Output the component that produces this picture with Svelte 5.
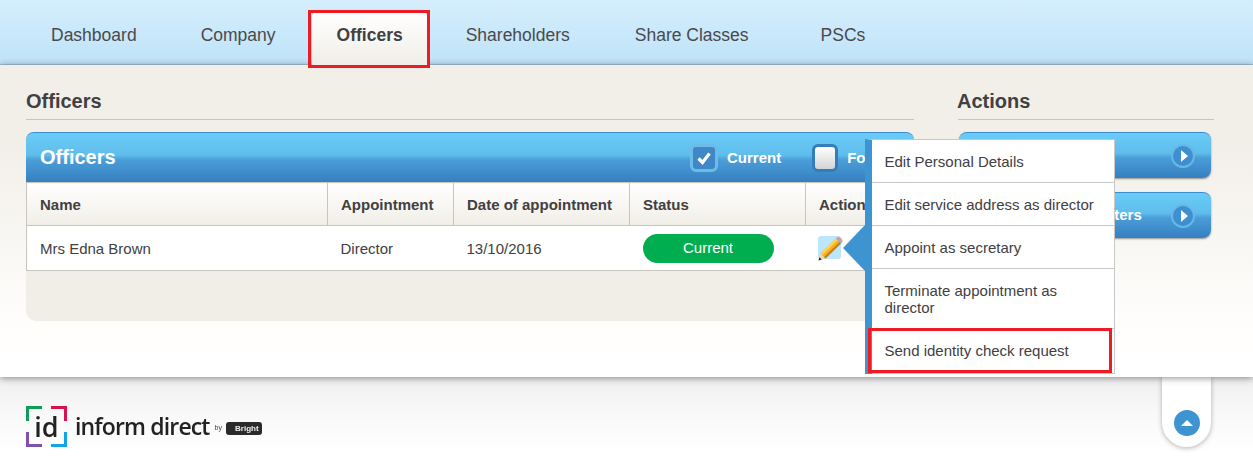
<script>
  const tabs = ['Dashboard', 'Company', 'Officers', 'Shareholders', 'Share Classes', 'PSCs'];
  const menuItems = [
    'Edit Personal Details',
    'Edit service address as director',
    'Appoint as secretary',
    'Terminate appointment as director',
    'Send identity check request'
  ];
</script>

<header class="top">
  <nav class="tabs">
    {#each tabs as tab}
      <a class="tab" class:active={tab === 'Officers'} href="#top">{tab}</a>
    {/each}
  </nav>
</header>

<main class="content">
  <section class="left">
    <h2>Officers</h2>
    <div class="panel">
      <div class="panel-head">
        <span class="panel-title">Officers</span>
        <div class="filters">
          <span class="check on">
            <svg viewBox="0 0 20 20" width="20" height="20"><path d="M4.500 10.500 8.500 14.500 15.500 5.500" fill="none" stroke="#fff" stroke-width="3.200"/></svg>
          </span>
          <span class="check-label current">Current</span>
          <span class="check off"></span>
          <span class="check-label">Former</span>
        </div>
      </div>
      <table>
        <thead>
          <tr>
            <th class="c1">Name</th>
            <th class="c2">Appointment</th>
            <th class="c3">Date of appointment</th>
            <th class="c4">Status</th>
            <th class="c5">Actions</th>
          </tr>
        </thead>
        <tbody>
          <tr>
            <td>Mrs Edna Brown</td>
            <td>Director</td>
            <td>13/10/2016</td>
            <td><span class="status">Current</span></td>
            <td class="action-cell">
              <span class="pencil">
                <svg viewBox="0 0 25 25" width="25" height="25">
                  <path d="M0.500 24.500 2.500 17.500 7.500 22.500Z" fill="#ecd9b4"/>
                  <path d="M0.500 24.500 1.400 21.300 3.700 23.500Z" fill="#1d1d1d"/>
                  <path d="M2.500 17.500 18 2.500 23 7.500 7.500 22.500Z" fill="#f7b21f"/>
                  <path d="M2.500 17.500 18 2.500 19.700 4.200 4.200 19.200Z" fill="#fbd354"/>
                  <path d="M6 21 21.400 6 23 7.500 7.500 22.500Z" fill="#c97f14"/>
                  <path d="M18 2.500 19.500 1 24.300 6 23 7.500Z" fill="#a9a9a9"/>
                  <path d="M19.500 1C21 -0.500 25.800 4.300 24.300 6Z" fill="#ea8fa0"/>
                </svg>
              </span>
              <div class="menu">
                <span class="arrow"></span>
                {#each menuItems as item, i}
                  <a class="menu-item" class:flagged={i === 4} href="#top">{item}</a>
                {/each}
              </div>
            </td>
          </tr>
        </tbody>
      </table>
      <div class="panel-foot"></div>
    </div>
  </section>

  <aside class="right">
    <h2>Actions</h2>
    <a class="action-btn" href="#top">
      <span>Edit company</span>
      <span class="go"><span class="go-arrow"></span></span>
    </a>
    <a class="action-btn second" href="#top">
      <span class="btn-label">View statutory registers</span>
      <span class="go"><span class="go-arrow"></span></span>
    </a>
  </aside>
</main>

<footer class="bottom">
  <div class="logo">
    <div class="mark">
      <span class="corner tl"></span>
      <span class="corner tr"></span>
      <span class="corner bl"></span>
      <span class="corner br"></span>
      <span class="mark-text">id</span>
    </div>
    <span class="wordmark">inform direct</span>
    <span class="by">by</span>
    <span class="bright">Bright</span>
  </div>
  <div class="to-top">
    <span class="to-top-circle"><span class="to-top-arrow"></span></span>
  </div>
</footer>

<style>
  :global(body) {
    margin: 0;
    background: #fff;
    font-family: 'Liberation Sans', Arial, sans-serif;
    color: #414042;
  }

  a {
    text-decoration: none;
    color: inherit;
  }

  .top {
    height: 64px;
    background: linear-gradient(#d5eefd, #bfe3f9);
    border-bottom: 1px solid #a3c6dc;
  }

  .tabs {
    display: flex;
    padding-left: 26px;
    height: 64px;
  }

  .tab {
    padding: 0 25px;
    margin-right: 15px;
    font-size: 17.500px;
    line-height: 70px;
    color: #4a4a4a;
  }

  .tab:first-child {
    margin-right: 14px;
  }

  .tab:last-child {
    margin-left: 7px;
  }

  .tab.active {
    position: relative;
    margin: 12px 14px 0 -4px;
    height: 53px;
    line-height: 46px;
    padding: 0 24px 0 25px;
    font-weight: bold;
    color: #414042;
    background: linear-gradient(#fff, #f1eee7);
    border-radius: 5px 5px 0 0;
    box-shadow: 0 -1px 3px rgba(0, 0, 0, 0.2);
    z-index: 1;
  }

  /* red annotation box round the current tab */
  .tab.active::after {
    content: '';
    position: absolute;
    left: -4px;
    right: -3px;
    top: -2px;
    bottom: -3px;
    border: 3px solid #ed1c24;
  }

  .content {
    position: relative;
    z-index: 0;
    height: 312px;
    padding: 0 39px 0 26px;
    box-sizing: border-box;
    display: flex;
    gap: 44px;
    background: linear-gradient(#f2efe9 0, #f2efe9 25%, #fffefd 85%, #fff 100%);
    box-shadow: 0 1px 7px rgba(0, 0, 0, 0.45);
  }

  .left {
    width: 888px;
  }

  .right {
    width: 256px;
  }

  h2 {
    margin: 0 0 12px;
    height: 55px;
    box-sizing: border-box;
    padding-top: 25px;
    font-size: 20px;
    line-height: 23px;
    border-bottom: 1px solid #c8c5bf;
    color: #414042;
  }

  .right h2 {
    text-indent: -1px;
  }

  .panel {
    background: #f1eee7;
    border-radius: 8px 8px 10px 10px;
  }

  .panel-foot {
    height: 50px;
  }

  .panel-head {
    height: 50px;
    display: flex;
    align-items: center;
    justify-content: space-between;
    padding: 0 0 0 14px;
    box-sizing: border-box;
    border-radius: 8px 8px 0 0;
    border-top: 1px solid #3a8ed0;
    background: linear-gradient(#6accf6 0, #5fbdec 45%, #4a9ed8 55%, #367fc0 100%);
    color: #fff;
  }

  .panel-title {
    font-size: 20px;
    font-weight: bold;
  }

  .filters {
    display: flex;
    align-items: center;
    width: 224px;
  }

  .check {
    width: 22px;
    height: 22px;
    display: flex;
    align-items: center;
    justify-content: center;
    border-radius: 6px;
    flex-shrink: 0;
  }

  .check.on {
    background: #3f88c8;
    border: 3px solid #6cbbe9;
  }

  .check.off {
    background: linear-gradient(#fff, #d4d4d4);
    border: 3px solid #357cba;
    width: 20px;
  }

  .check-label {
    font-size: 15px;
    font-weight: bold;
    margin-left: 9px;
  }

  .check-label.current {
    margin-right: 31px;
  }

  table {
    width: 100%;
    border-collapse: collapse;
    table-layout: fixed;
    font-size: 15px;
  }

  th {
    height: 43px;
    padding: 0 0 0 13px;
    text-align: left;
    font-size: 15px;
    background: linear-gradient(#fff, #f1eee7);
    border-right: 1px solid #c8c5bf;
    border-top: 1px solid #c8c5bf;
    border-bottom: 1px solid #c8c5bf;
    box-sizing: border-box;
  }

  th:first-child {
    border-left: 1px solid #c8c5bf;
  }

  th:last-child {
    border-right: 0;
  }

  .c1 { width: 301px; }
  .c2 { width: 126px; }
  .c3 { width: 176px; }
  .c4 { width: 176px; }

  td {
    height: 45px;
    padding: 0 0 0 13px;
    background: #fff;
    border-bottom: 1px solid #c8c5bf;
    box-sizing: border-box;
  }

  td:first-child {
    border-left: 1px solid #c8c5bf;
  }

  .status {
    display: block;
    width: 131px;
    height: 29px;
    line-height: 28px;
    text-align: center;
    color: #fff;
    background: #00ae4f;
    border-radius: 15px;
    margin-top: 1px;
  }

  .action-cell {
    position: relative;
    padding-left: 12px;
  }

  .pencil {
    display: block;
    width: 23px;
    height: 23px;
    background: #bde5fb;
    border-radius: 3px;
    margin-top: -1px;
  }

  .pencil svg {
    display: block;
    overflow: visible;
  }

  .menu {
    position: absolute;
    left: 59px;
    top: -87px;
    width: 250px;
    box-sizing: border-box;
    background: #fff;
    border-left: 7px solid #3d94d1;
    border-top: 1px solid #c8c8c8;
    border-right: 1px solid #c8c8c8;
    z-index: 5;
  }

  .arrow {
    position: absolute;
    left: -29px;
    top: 85px;
    border-style: solid;
    border-width: 23px 22px 23px 0;
    border-color: transparent #3d94d1 transparent transparent;
  }

  .menu-item {
    display: block;
    padding: 13px 13px 12px;
    font-size: 15px;
    line-height: 17px;
    color: #414042;
    border-bottom: 1px solid #c8c8c8;
  }

  .menu-item.flagged {
    position: relative;
    padding-bottom: 14px;
  }

  /* red annotation box round the last menu entry */
  .menu-item.flagged::after {
    content: '';
    position: absolute;
    left: -4px;
    right: 2px;
    top: -1px;
    bottom: 0;
    border: 3px solid #ed1c24;
  }

  .action-btn {
    display: flex;
    align-items: center;
    justify-content: space-between;
    width: 252px;
    height: 46px;
    margin-left: 1px;
    box-sizing: border-box;
    padding: 0 16px 0 14px;
    border-radius: 8px;
    margin-bottom: 14px;
    color: #fff;
    font-size: 15px;
    font-weight: bold;
    border-top: 1px solid #3a8ed0;
    background: linear-gradient(#6accf6 0, #5fbdec 45%, #4a9ed8 55%, #367fc0 100%);
    box-shadow: 0 1px 2px rgba(0, 0, 0, 0.4);
  }

  .btn-label {
    margin-bottom: 2px;
    margin-left: -1px;
  }

  .go {
    width: 20px;
    height: 20px;
    border-radius: 50%;
    background: #3d8fcf;
    border: 2px solid #66b9e6;
    display: flex;
    align-items: center;
    justify-content: center;
  }

  .go-arrow {
    margin-left: 2px;
    border-style: solid;
    border-width: 6px 0 6px 7px;
    border-color: transparent transparent transparent #fff;
  }

  .bottom {
    height: 95px;
    display: flex;
    justify-content: space-between;
    align-items: flex-start;
    padding: 0 42px 0 26px;
    box-sizing: border-box;
    background: linear-gradient(#efefef 0, #f8f8f8 35%, #fff 80%);
  }

  .logo {
    display: flex;
    align-items: center;
    margin-top: 28px;
    height: 42px;
    filter: blur(0.5px);
  }

  .mark {
    position: relative;
    width: 41px;
    height: 41px;
    margin-right: 8px;
  }

  .corner {
    position: absolute;
    width: 13px;
    height: 12px;
    border: 0 solid;
  }

  .tl { left: 0; top: 0; border-color: #0f9d58; border-width: 3px 0 0 3px; }
  .tr { right: 0; top: 0; border-color: #d6134f; border-width: 3px 3px 0 0; }
  .bl { left: 0; bottom: 0; border-color: #7c52ae; border-width: 0 0 3px 3px; }
  .br { right: 0; bottom: 0; border-color: #12a5e6; border-width: 0 3px 3px 0; }

  .mark-text {
    position: absolute;
    left: 0;
    right: 0;
    top: 5px;
    text-align: center;
    font-family: 'Open Sans', sans-serif;
    font-weight: 600;
    font-size: 27px;
    line-height: 32px;
    color: #222;
  }

  .wordmark {
    font-family: 'Open Sans', sans-serif;
    font-weight: 600;
    font-size: 23px;
    letter-spacing: -0.850px;
    color: #222;
  }

  .by {
    font-size: 7px;
    margin: 3px 4px 0 5px;
    color: #444;
  }

  .bright {
    font-size: 8px;
    line-height: 13px;
    font-weight: bold;
    color: #eee;
    background: #2a2a2a;
    border-radius: 3px;
    padding: 0 3px 0 9px;
    margin-top: 4px;
  }

  .to-top {
    width: 49px;
    height: 70px;
    background: #fff;
    border-radius: 0 0 25px 25px;
    box-shadow: 0 1px 5px rgba(0, 0, 0, 0.3);
    display: flex;
    justify-content: center;
    align-items: flex-end;
    padding-bottom: 11px;
    box-sizing: border-box;
  }

  .to-top-circle {
    width: 26px;
    height: 26px;
    border-radius: 50%;
    background: #3d94d1;
    display: flex;
    align-items: center;
    justify-content: center;
  }

  .to-top-arrow {
    border-style: solid;
    border-width: 0 6px 6px 6px;
    border-color: transparent transparent #fff transparent;
  }
</style>
